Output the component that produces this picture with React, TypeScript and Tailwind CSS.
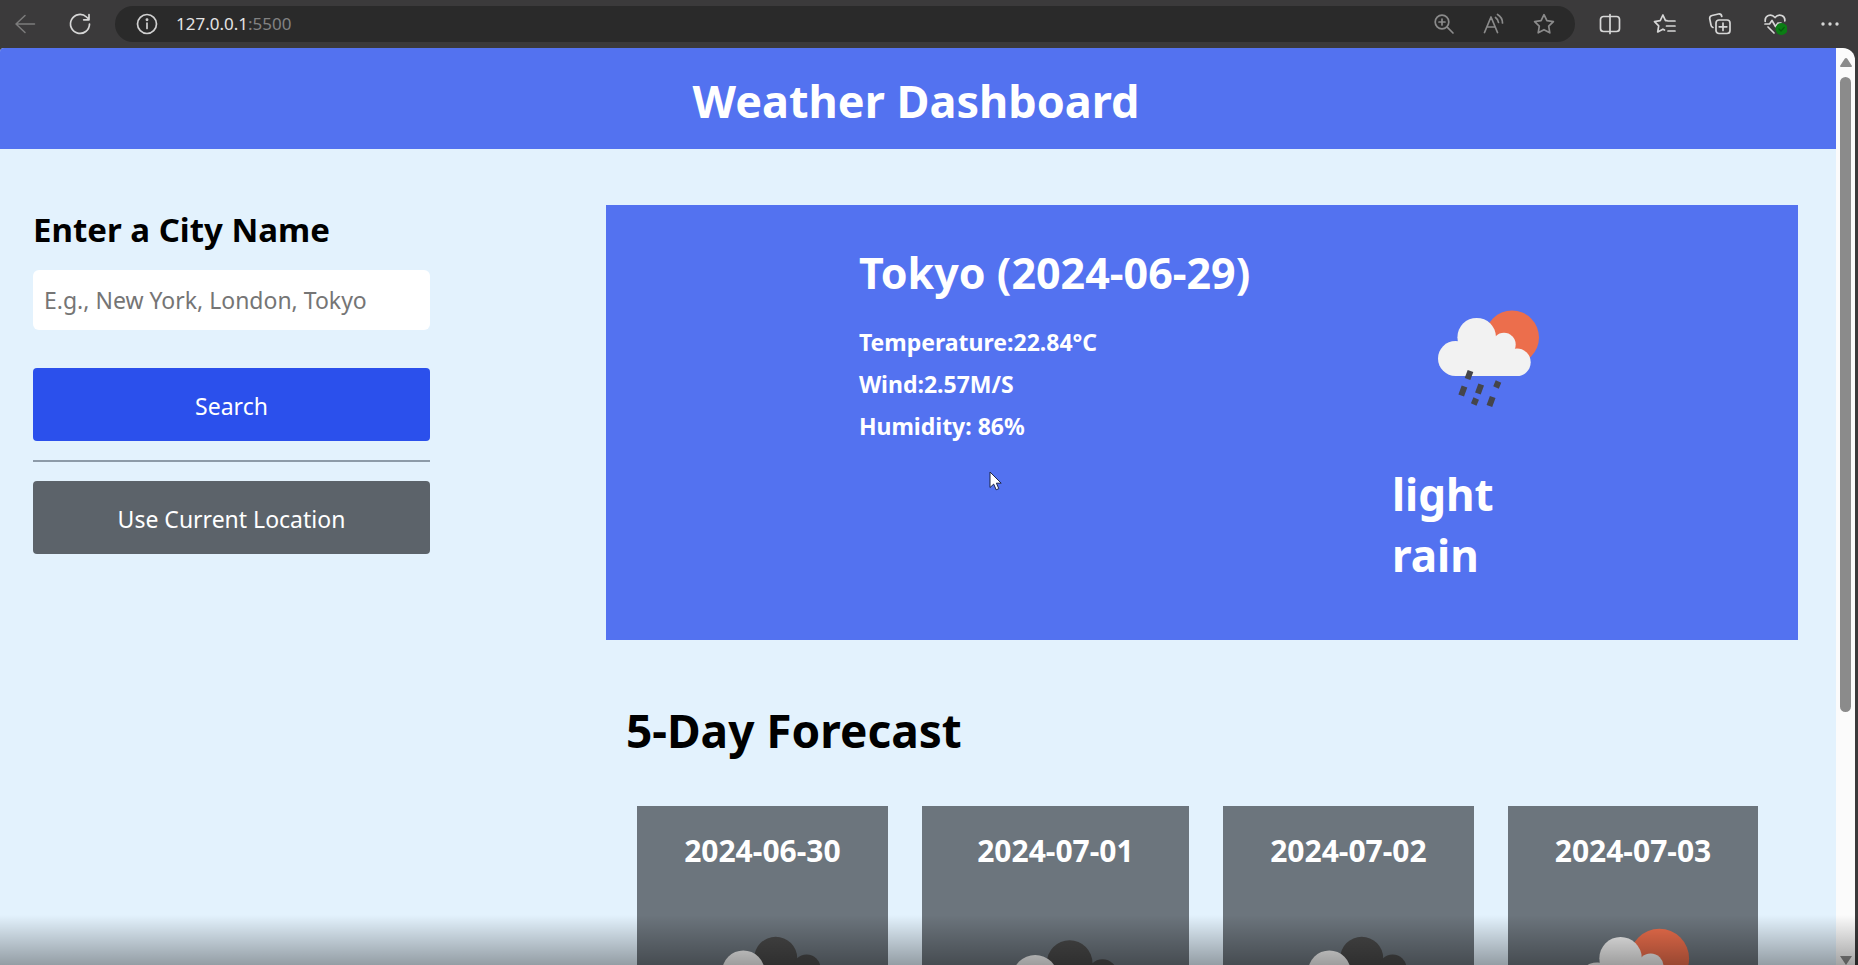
import type { ReactNode } from "react";

function Icon({ label, className, children }: { label: string; className: string; children: ReactNode }) {
  return (
    <button type="button" aria-label={label} className={`flex h-6 w-6 shrink-0 items-center justify-center ${className}`}>
      <svg viewBox="0 0 24 24" className="h-6 w-6" fill="none" stroke="currentColor" strokeWidth="1.7" strokeLinecap="round" strokeLinejoin="round">
        {children}
      </svg>
    </button>
  );
}

function BrowserBar() {
  return (
    <div className="flex h-12 shrink-0 items-center bg-[#3b3a3b] pr-4 pb-px pl-[13px] text-[#d6d6d6]">
      <Icon label="Back" className="text-[#7c7c7c]">
        <path d="M21.500 12H3M12 3.500L3 12l9 8.500" strokeWidth="1.500" />
      </Icon>
      <Icon label="Refresh" className="ml-[31px]">
        <path d="M21.500 12a9.500 9.500 0 1 1-3-7l2.500 2.500M21 2.500v5.300h-5.300" />
      </Icon>
      <div className="ml-[23px] flex h-9 min-w-0 flex-1 items-center rounded-full bg-[#2a2a2a] pr-[19px] pl-5">
        <Icon label="Site information" className="text-[#d0d0d0]">
          <circle cx="12" cy="12" r="9.500" />
          <path d="M12 11v5.500" />
          <circle cx="12" cy="7.700" r=".6" fill="currentColor" />
        </Icon>
        <div className="ml-[17px] flex-1 text-[17px] leading-6 text-[#e4e4e4]">
          127.0.0.1<span className="text-[#828282]">:5500</span>
        </div>
        <div className="flex gap-[26px] text-[#8b8b8b]">
          <Icon label="Zoom" className="">
            <circle cx="10" cy="10" r="6.800" />
            <path d="M15.200 15.200l5.800 5.800M7 10h6M10 7v6" />
          </Icon>
          <Icon label="Read aloud" className="">
            <path d="M2.500 20.500L9 5l6.500 15.500M5 15h8M13.500 5.500a7 7 0 0 1 3 5M15.500 2.500a10 10 0 0 1 5 8.500" />
          </Icon>
          <Icon label="Add to favorites" className="">
            <path d="M12 2.700l2.900 6 6.500.9-4.700 4.600 1.100 6.600-5.800-3.100-5.800 3.100 1.100-6.600L2.600 9.600l6.500-.9z" />
          </Icon>
        </div>
      </div>
      <div className="ml-[23px] flex gap-[31px]">
        <Icon label="Split screen" className="">
          <path d="M9 4.500H5.500a3 3 0 0 0-3 3v9a3 3 0 0 0 3 3H9M15 4.500h3.500a3 3 0 0 1 3 3v9a3 3 0 0 1-3 3H15M9 4.500h6M9 19.500h6M12 2.500v19" />
        </Icon>
        <Icon label="Favorites" className="">
          <path d="M14 8.700h-1.500L9.900 3 7.200 8.700l-5.700.9 4.200 4.200-1 6.200 5.200-2.800 1.600.9M15 9h7M13.500 14H22M15 19h7" />
        </Icon>
        <Icon label="Collections" className="">
          <rect x="8" y="8" width="14" height="13.500" rx="3" />
          <path d="M15 11v7.500M11.200 14.800h7.600M5 15.500A3 3 0 0 1 3 13L1.700 6.600A3 3 0 0 1 4 3.500L10.500 2a3 3 0 0 1 3.300 2.500" />
        </Icon>
        <Icon label="Browser essentials" className="">
          <path d="M2.200 9.500C1.500 3.500 8 1 12 5.500c4-4.500 10.500-2 9.800 3.500M2 12h4.500L9 8.500l3.500 6L15 11h3M5 15l6 6" />
          <circle cx="18.500" cy="17" r="6" fill="#0b7d14" stroke="none" />
          <path d="M16 17l2 2 3.200-3.500" stroke="#075c0d" strokeWidth="1.200" />
        </Icon>
        <Icon label="Settings and more" className="">
          <g fill="currentColor" stroke="none">
            <circle cx="5" cy="12" r="1.700" />
            <circle cx="12" cy="12" r="1.700" />
            <circle cx="19" cy="12" r="1.700" />
          </g>
        </Icon>
      </div>
    </div>
  );
}

function CloudShape({ fill }: { fill: string }) {
  return (
    <g fill={fill}>
      <circle cx="17.500" cy="48.500" r="17.500" />
      <circle cx="38.700" cy="27.200" r="19.300" />
      <circle cx="66" cy="34.500" r="11.700" />
      <circle cx="79" cy="52.300" r="13.700" />
      <path d="M17.500 40L40 28h22l10 12 7 12v14H17.500z" />
    </g>
  );
}

function RainIcon({ viewBox, className }: { viewBox: string; className: string }) {
  return (
    <svg viewBox={viewBox} className={className} role="img" aria-label="Light rain">
      <circle cx="74" cy="27.500" r="27" fill="#ec6e4c" />
      <CloudShape fill="#f2f2f2" />
      <g stroke="#45454a" strokeWidth="6" strokeLinejoin="round">
        <path d="M32.500 61l-3 8M26.500 76.500l-3.300 9M43.200 74.500l-3.300 9M60.500 71.500l-2.500 6M38.200 88.500l-2.500 6M54.700 87l-3.300 9" />
      </g>
    </svg>
  );
}

function BrokenCloudsIcon({ viewBox, className }: { viewBox: string; className: string }) {
  return (
    <svg viewBox={viewBox} className={className} role="img" aria-label="Broken clouds">
      <g fill="#484848">
        <circle cx="64" cy="20" r="19.500" />
        <circle cx="92" cy="29" r="12.500" />
        <path d="M45 24h50v30H45z" />
      </g>
      <g transform="translate(-4 5)">
        <CloudShape fill="#f2f2f2" />
      </g>
    </svg>
  );
}

const forecast = [
  { date: "2024-06-30", icon: "clouds" },
  { date: "2024-07-01", icon: "clouds" },
  { date: "2024-07-02", icon: "clouds" },
  { date: "2024-07-03", icon: "rain" },
];

function SearchPanel() {
  return (
    <form className="flex w-[397px] flex-col" onSubmit={(e) => e.preventDefault()}>
      <label htmlFor="city" className="text-[33px] leading-[44px] font-bold text-black">
        Enter a City Name
      </label>
      <input
        id="city"
        type="text"
        placeholder="E.g., New York, London, Tokyo"
        className="mt-[18px] h-[60px] rounded-md bg-white px-[11px] text-[23px] text-black placeholder:text-[#757575]"
      />
      <button type="submit" className="mt-[38px] h-[73px] rounded bg-[#2b50ec] pt-1 text-[23px] text-white">
        Search
      </button>
      <hr className="mt-[19px] mb-[19px] border-t-2 border-[#8d9ba8]" />
      <button type="button" className="h-[73px] rounded bg-[#5c636a] pt-1 text-[23px] text-white">
        Use Current Location
      </button>
    </form>
  );
}

function CurrentWeather() {
  return (
    <section className="flex h-[435px] bg-[#5372f0] text-white">
      <div className="ml-[253px] w-[533px] pt-[38px]">
        <h2 className="text-[43px] leading-[60px] font-bold">Tokyo (2024-06-29)</h2>
        <div className="mt-[18px] text-[23px] leading-[42px] font-bold">
          <p>Temperature:22.84°C</p>
          <p>Wind:2.57M/S</p>
          <p>Humidity: 86%</p>
        </div>
      </div>
      <div className="w-[160px] pt-[105px]">
        <RainIcon viewBox="0 0 102 98" className="ml-[46px] h-[98px] w-[102px]" />
        <p className="mt-14 text-[44px] leading-[61px] font-bold">light rain</p>
      </div>
    </section>
  );
}

function Forecast() {
  return (
    <section className="pt-[56px]">
      <h2 className="pl-5 text-[46px] leading-[68px] font-bold text-black">5-Day Forecast</h2>
      <ul className="mt-[42px] grid grid-cols-[251fr_267fr_251fr_250fr] gap-[34px] pr-10 pl-[31px]">
        {forecast.map((day) => (
          <li key={day.date} className="flex h-[420px] flex-col items-center bg-[#6c757d] pt-6 text-white">
            <h3 className="text-[30px] leading-[42px] font-bold">{day.date}</h3>
            {day.icon === "rain" ? (
              <RainIcon viewBox="-50 -43 200 200" className="mt-[9px] w-[88%]" />
            ) : (
              <BrokenCloudsIcon viewBox="-48 -50 200 200" className="mt-[9px] w-[88%]" />
            )}
          </li>
        ))}
      </ul>
    </section>
  );
}

function ScrollTrack() {
  return (
    <div className="flex w-[19px] shrink-0 flex-col items-center bg-[#fbfbfb] pt-[10px]">
      <svg viewBox="0 0 12 9" className="h-[9px] w-3 shrink-0" fill="#8b8b8b">
        <path d="M6 0q.8 0 1.300.8L12 8q0 1-1 1H1Q0 9 0 8L4.700.8Q5.200 0 6 0z" />
      </svg>
      <div className="mt-[10px] h-[70%] w-[11px] rounded-full bg-[#8b8b8b]" />
      <svg viewBox="0 0 12 9" className="mt-auto h-[9px] w-3 shrink-0" fill="#8b8b8b">
        <path d="M6 9L0 0h12z" />
      </svg>
    </div>
  );
}

export default function App() {
  return (
    <div className="relative flex h-screen flex-col overflow-hidden bg-[#3b3a3b] font-['Noto_Sans','Open_Sans',sans-serif]">
      <BrowserBar />
      <div className="mr-[3px] flex min-h-0 flex-1 overflow-hidden rounded-tl-sm rounded-tr-xl">
        <div className="min-w-0 flex-1 overflow-hidden bg-[#e3f2fd]">
          <h1 className="bg-[#5372f0] pt-[21px] pr-1 pb-4 text-center text-[45px] leading-[64px] font-bold text-white">
            Weather Dashboard
          </h1>
          <main className="flex">
            <div className="w-[33%] shrink-0 pt-[59px] pl-[33px]">
              <SearchPanel />
            </div>
            <div className="min-w-0 flex-1 pt-14 pr-[38px]">
              <CurrentWeather />
              <Forecast />
            </div>
          </main>
        </div>
        <ScrollTrack />
      </div>
      <svg viewBox="0 0 13 20" className="absolute top-[471px] left-[989px] h-5 w-[13px]">
        <path d="M1 1v15.500l3.700-3.400 2.500 5.700 2.600-1.200-2.400-5.400h4.800z" fill="#fff" stroke="#1d2547" strokeWidth="1" />
      </svg>
      <div className="pointer-events-none absolute inset-x-0 bottom-0 h-[50px] bg-linear-to-b from-black/0 to-black/35" />
    </div>
  );
}
